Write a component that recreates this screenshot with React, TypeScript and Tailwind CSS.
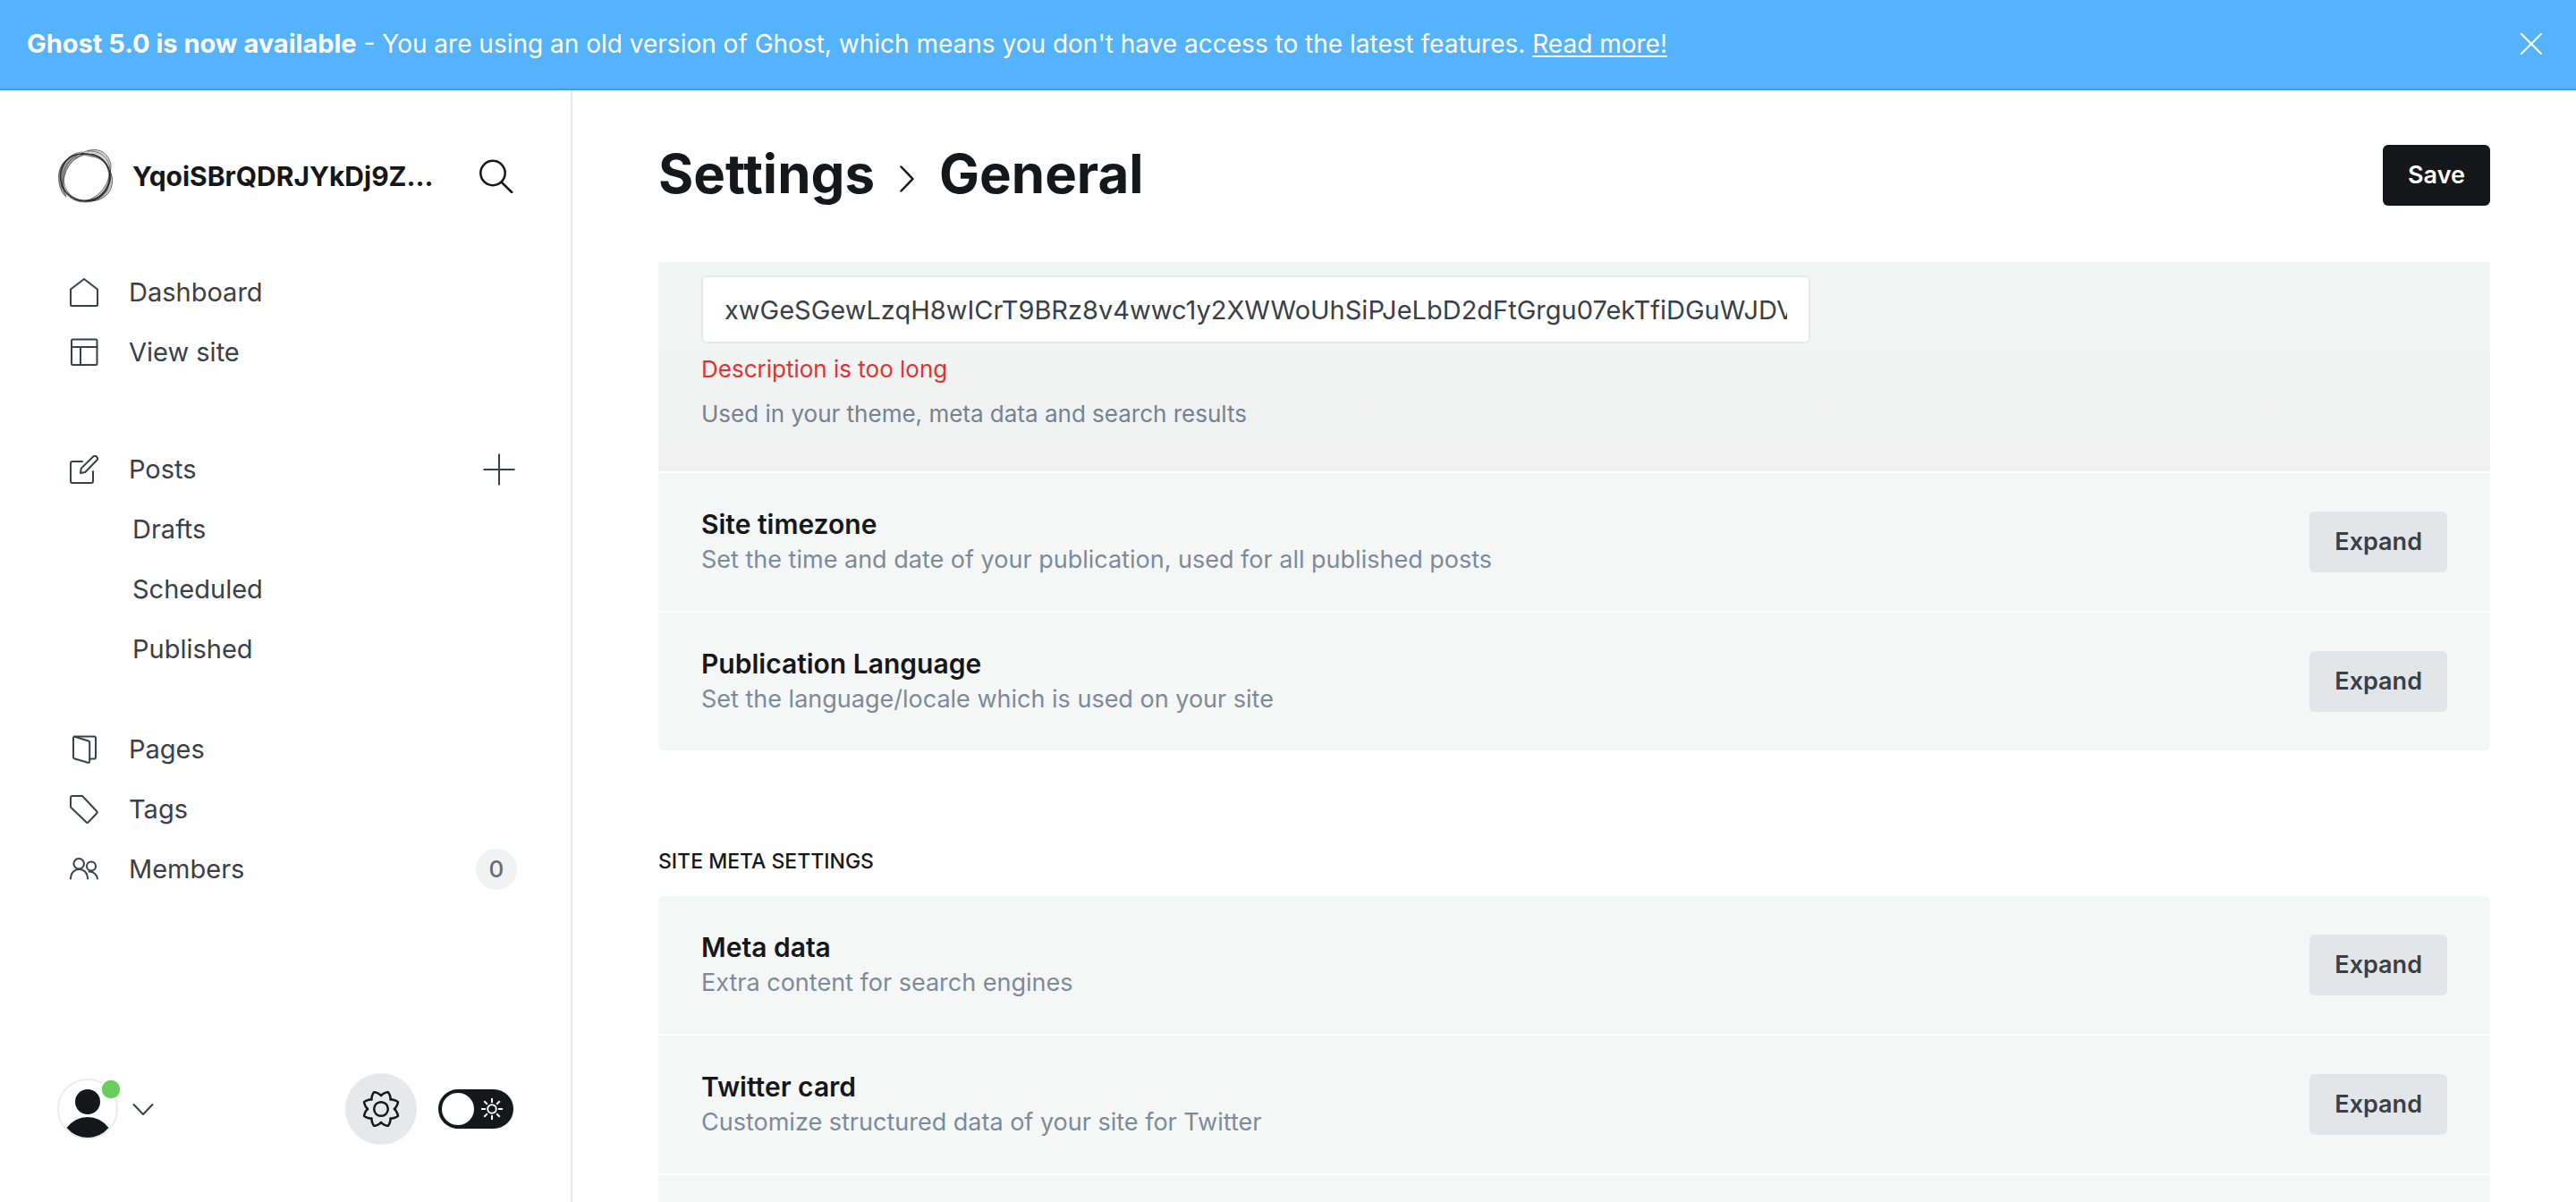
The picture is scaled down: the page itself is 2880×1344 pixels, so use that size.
import React from 'react';

const iconProps = {
  fill: 'none',
  stroke: 'currentColor',
  strokeWidth: 2,
  strokeLinecap: 'round' as const,
  strokeLinejoin: 'round' as const,
  'aria-hidden': true,
};

function NavIcon({ children }: { children: React.ReactNode }) {
  return (
    <svg viewBox="0 0 32 32" className="size-8 shrink-0" {...iconProps}>
      {children}
    </svg>
  );
}

const HomeIcon = () => (
  <NavIcon>
    <path d="M16 1 31 12.5V30a1 1 0 0 1-1 1H2a1 1 0 0 1-1-1V12.5Z" />
  </NavIcon>
);
const LayoutIcon = () => (
  <NavIcon>
    <rect x="2" y="1.5" width="28.5" height="28.5" rx="1.5" />
    <path d="M2 10h28.5M12 10v20" />
  </NavIcon>
);
const PostsIcon = () => (
  <NavIcon>
    <path d="M14 7H3a2 2 0 0 0-2 2v20a2 2 0 0 0 2 2h21a2 2 0 0 0 2-2V18" />
    <path d="m12 20 .8-5.4L26 1.7a2.9 2.9 0 0 1 4.1 4.1L17.2 19Z" />
  </NavIcon>
);
const PagesIcon = () => (
  <NavIcon>
    <path d="M4 2.8v22a1.6 1.6 0 0 0 1.2 1.5l15.2 4.5a1.4 1.4 0 0 0 1.8-1.3V8a1.6 1.6 0 0 0-1.2-1.5L5.8 1.7A1.4 1.4 0 0 0 4 2.8Z" />
    <path d="M5.5 1.5H27a2 2 0 0 1 2 2V24.5a2 2 0 0 1-2 2h-4.5" />
  </NavIcon>
);
const TagIcon = () => (
  <NavIcon>
    <path d="M3 1h11l16.3 17.3a1.5 1.5 0 0 1 0 2L20.5 30.5a1.2 1.2 0 0 1-1.8 0L1.5 14a2 2 0 0 1-.5-1.3V3a2 2 0 0 1 2-2Z" />
  </NavIcon>
);
const MembersIcon = () => (
  <NavIcon>
    <circle cx="10.2" cy="9.8" r="5.8" />
    <path d="M1 26.5v-1a9.5 9.5 0 0 1 19 0v1" />
    <circle cx="24" cy="12.6" r="5" />
    <path d="M21.5 18.6a9 9 0 0 1 9.5 7.9" />
  </NavIcon>
);

const gearOutline =
  Array.from({ length: 128 }, (_, i) => {
    const a = (i / 128) * Math.PI * 2;
    const r = 17.6 - 2.8 * Math.cos(8 * a);
    const shift = -0.02 * Math.sin(8 * a) - 0.04 * Math.sin(16 * a);
    return `${i ? 'L' : 'M'}${(22 + r * Math.cos(a + shift)).toFixed(2)} ${(22 + r * Math.sin(a + shift)).toFixed(2)}`;
  }).join('') + 'Z';

function SiteLogo() {
  return (
    <svg viewBox="0 0 64 64" className="size-16 shrink-0" fill="none" aria-hidden="true">
      <g fill="#777" fillOpacity="0.45" stroke="#222" strokeOpacity="0.6" strokeWidth="1">
        <path d="M27 7C33 2 49-1 56 10c4 5 5 11 3 18C56 19 50 11 38 10c-4-1-8-2-11-3Z" fillOpacity="0.3" />
        <path d="M29 7C14 7 2 17 1.5 32c0 10 2.5 18 8.5 23C6 45 6 38 9 29 12 19 20 11 29 8Z" fillOpacity="0.7" />
        <path d="M59 26c4 8 4 21-5 28-7 6-14 6-23 6 14-4 26-15 28-34Z" />
      </g>
      <g stroke="#222" strokeWidth="1" strokeOpacity="0.55">
        <path d="M26 7C12 8 3 20 3.5 33 4 48 16 60 31 60c15 0 27-10 28-27 0-13-9-23-21-25-4-1-8-2-12-1Z" strokeWidth="1.5" strokeOpacity="0.9" />
        <path d="M29 5C13 5 4 19 5 34c1 14 11 25 26 25 16 0 26-11 27-25C58 20 50 9 38 7" />
        <path d="M22 9C12 14 7 23 7 33c0 15 10 26 24 26 17 0 30-14 29-30" />
        <path d="M34 4c12-1 21 5 24 15 4 14-1 27-11 35" />
        <path d="M20 13C31 5 44 6 52 14c4 4 6 9 7 14" />
        <path d="M4 42c5 12 14 19 27 19 12 0 22-6 26-16" />
      </g>
    </svg>
  );
}

function Banner() {
  return (
    <aside className="flex h-[101px] shrink-0 items-center justify-between border-b-2 border-[#429cdd] bg-[#54b3fa] pr-[38px] pb-0.5 pl-[30px] text-[28px] leading-10 text-white">
      <p>
        <strong className="text-[29px] font-bold">Ghost 5.0 is now available</strong> - You are using an old version of
        Ghost, which means you don't have access to the latest features.{' '}
        <a href="#read-more" className="underline decoration-2 underline-offset-3">
          Read more!
        </a>
      </p>
      <button type="button" aria-label="Close">
        <svg viewBox="0 0 24 24" className="size-6" {...iconProps}>
          <path d="m.5.5 23 23M23.5.5l-23 23" />
        </svg>
      </button>
    </aside>
  );
}

function NavLink({ icon, label, children }: { icon: React.ReactNode; label: string; children?: React.ReactNode }) {
  return (
    <li className="flex h-[67px] items-center justify-between pr-[60px] pl-[78px]">
      <a href={`#${label}`} className="flex items-center gap-[34px]">
        {icon}
        {label}
      </a>
      {children}
    </li>
  );
}

function SubLink({ label }: { label: string }) {
  return (
    <li className="flex h-[67px] items-center pl-[148px]">
      <a href={`#${label}`}>{label}</a>
    </li>
  );
}

function Sidebar() {
  return (
    <div className="flex w-[640px] shrink-0 flex-col border-r-2 border-[#e6e7e8] text-[29px] leading-10 text-[#394047]">
      <header className="flex items-center pt-16 pr-16 pl-16 text-[#15171a]">
        <SiteLogo />
        <span className="ml-5 flex-1 truncate text-[30px] font-bold">YqoiSBrQDRJYkDj9Z...</span>
        <button type="button" aria-label="Search">
          <svg viewBox="0 0 38 38" className="size-[38px]" {...iconProps} strokeWidth={2.5}>
            <circle cx="15" cy="15.5" r="13.7" />
            <path d="m25 26 11.2 11" />
          </svg>
        </button>
      </header>
      <nav className="mt-16 flex flex-col">
        <ul>
          <NavLink icon={<HomeIcon />} label="Dashboard" />
          <NavLink icon={<LayoutIcon />} label="View site" />
        </ul>
        <ul className="mt-16">
          <NavLink icon={<PostsIcon />} label="Posts">
            <button type="button" aria-label="New post">
              <svg viewBox="0 0 40 40" className="size-10" {...iconProps} strokeLinecap="butt">
                <path d="M20 2.5v35M2.5 20h35" />
              </svg>
            </button>
          </NavLink>
          <SubLink label="Drafts" />
          <SubLink label="Scheduled" />
          <SubLink label="Published" />
        </ul>
        <ul className="mt-[45px]">
          <NavLink icon={<PagesIcon />} label="Pages" />
          <NavLink icon={<TagIcon />} label="Tags" />
          <NavLink icon={<MembersIcon />} label="Members">
            <span className="flex size-[46px] items-center justify-center rounded-full bg-[#f0f2f4] text-[26px] font-medium text-[#626d79]">
              0
            </span>
          </NavLink>
        </ul>
      </nav>
      <footer className="mt-auto flex items-center px-16 pb-16">
        <button type="button" aria-label="Account menu" className="flex items-center gap-3">
          <svg viewBox="0 0 72 68" className="h-[68px] w-[72px]" aria-hidden="true">
            <circle cx="34" cy="34" r="33" fill="#fff" stroke="#ebecee" strokeWidth="2" />
            <circle cx="34" cy="26" r="14" fill="#15171a" />
            <path d="M10.5 55Q20 43 34 43t23.5 12Q48 66 34 66T10.5 55Z" fill="#15171a" />
            <circle cx="60" cy="12" r="12" fill="#fff" />
            <circle cx="60" cy="12" r="10.2" fill="#69cd5b" />
          </svg>
          <svg viewBox="0 0 24 24" className="size-6" {...iconProps}>
            <path d="m1.5 7 10.5 11 10.5-11" />
          </svg>
        </button>
        <button
          type="button"
          aria-label="Settings"
          className="ml-auto flex size-20 items-center justify-center rounded-full bg-[#e7e8ea] text-[#15171a]"
        >
          <svg viewBox="0 0 44 44" className="size-11" {...iconProps} strokeWidth={2.5}>
            <path d={gearOutline} />
            <circle cx="22" cy="22" r="7.8" />
          </svg>
        </button>
        <label className="ml-6 flex h-11 w-[84px] items-center justify-between rounded-full bg-[#15171a] pr-3 pl-1 text-white">
          <input type="checkbox" aria-label="Night shift" className="sr-only" />
          <span className="size-9 rounded-full bg-white" />
          <svg viewBox="0 0 24 24" className="size-6" {...iconProps} strokeLinecap="butt">
            <circle cx="12" cy="12" r="4.8" />
            <path d="M12 0v5M12 19v5M0 12h5M19 12h5M3.3 3.3l3.5 3.5M17.2 17.2l3.5 3.5M3.3 20.7l3.5-3.5M17.2 6.8l3.5-3.5" />
          </svg>
        </label>
      </footer>
    </div>
  );
}

function SettingRow({ title, description }: { title: string; description: string }) {
  return (
    <section className="flex h-[154px] shrink-0 items-center justify-between bg-[#f5f7f7] px-12">
      <div className="leading-10">
        <h4 className="text-[30px] font-semibold text-[#15171a]">{title}</h4>
        <p className="text-[27px] text-[#7c8b9a]">{description}</p>
      </div>
      <button
        type="button"
        className="h-[68px] rounded-md bg-[#e3e6e9] px-7 text-[27px] font-semibold text-[#394047]"
      >
        Expand
      </button>
    </section>
  );
}

export default function App() {
  return (
    <div className="flex h-screen flex-col overflow-hidden bg-white font-[Inter,sans-serif]">
      <Banner />
      <div className="flex min-h-0 flex-1">
        <Sidebar />
        <main className="flex min-w-0 flex-1 flex-col overflow-hidden px-24">
          <header className="flex h-48 shrink-0 items-center justify-between pb-0.5">
            <h2 className="flex items-center pb-1 text-[60px] leading-[72px] font-bold text-[#15171a]">
              <a href="#settings">Settings</a>
              <svg viewBox="0 0 16 30" className="mx-7 mt-3 h-[30px] w-4" {...iconProps} strokeWidth={2.5}>
                <path d="m1.5 1.5 13 13.5-13 13.5" />
              </svg>
              General
            </h2>
            <button type="button" className="h-[68px] rounded-md bg-[#15171a] px-7 text-[27px] font-semibold text-white">
              Save
            </button>
          </header>

          <div className="flex shrink-0 flex-col gap-0.5 overflow-hidden rounded-b-md">
            <section className="bg-linear-to-b from-[#f3f5f5] to-[#f0f0f0] px-12 pt-[15px] pb-[46px]">
              <input
                type="text"
                aria-label="Site description"
                aria-describedby="description-error description-help"
                defaultValue="xwGeSGewLzqH8wICrT9BRz8v4wwc1y2XWWoUhSiPJeLbD2dFtGrgu07ekTfiDGuWJDVqP4nZs"
                className="block h-[76px] w-full max-w-[1240px] rounded-md border-2 border-[#e6e9e9] bg-white px-6 text-[29px] text-[#394047]"
              />
              <p id="description-error" className="mt-[11px] text-[26px] leading-9 text-[#e2312f]">
                Description is too long
              </p>
              <p id="description-help" className="mt-[14px] text-[26px] leading-9 text-[#738393]">
                Used in your theme, meta data and search results
              </p>
            </section>
            <SettingRow
              title="Site timezone"
              description="Set the time and date of your publication, used for all published posts"
            />
            <SettingRow
              title="Publication Language"
              description="Set the language/locale which is used on your site"
            />
          </div>

          <h3 className="mt-[109px] mb-6 shrink-0 text-[23px] leading-[30px] font-medium text-[#15171a] uppercase">
            Site meta settings
          </h3>
          <div className="flex flex-1 flex-col gap-0.5 overflow-hidden rounded-t-md">
            <SettingRow title="Meta data" description="Extra content for search engines" />
            <SettingRow title="Twitter card" description="Customize structured data of your site for Twitter" />
            <div className="flex-1 bg-[#f5f7f7]" />
          </div>
        </main>
      </div>
    </div>
  );
}
